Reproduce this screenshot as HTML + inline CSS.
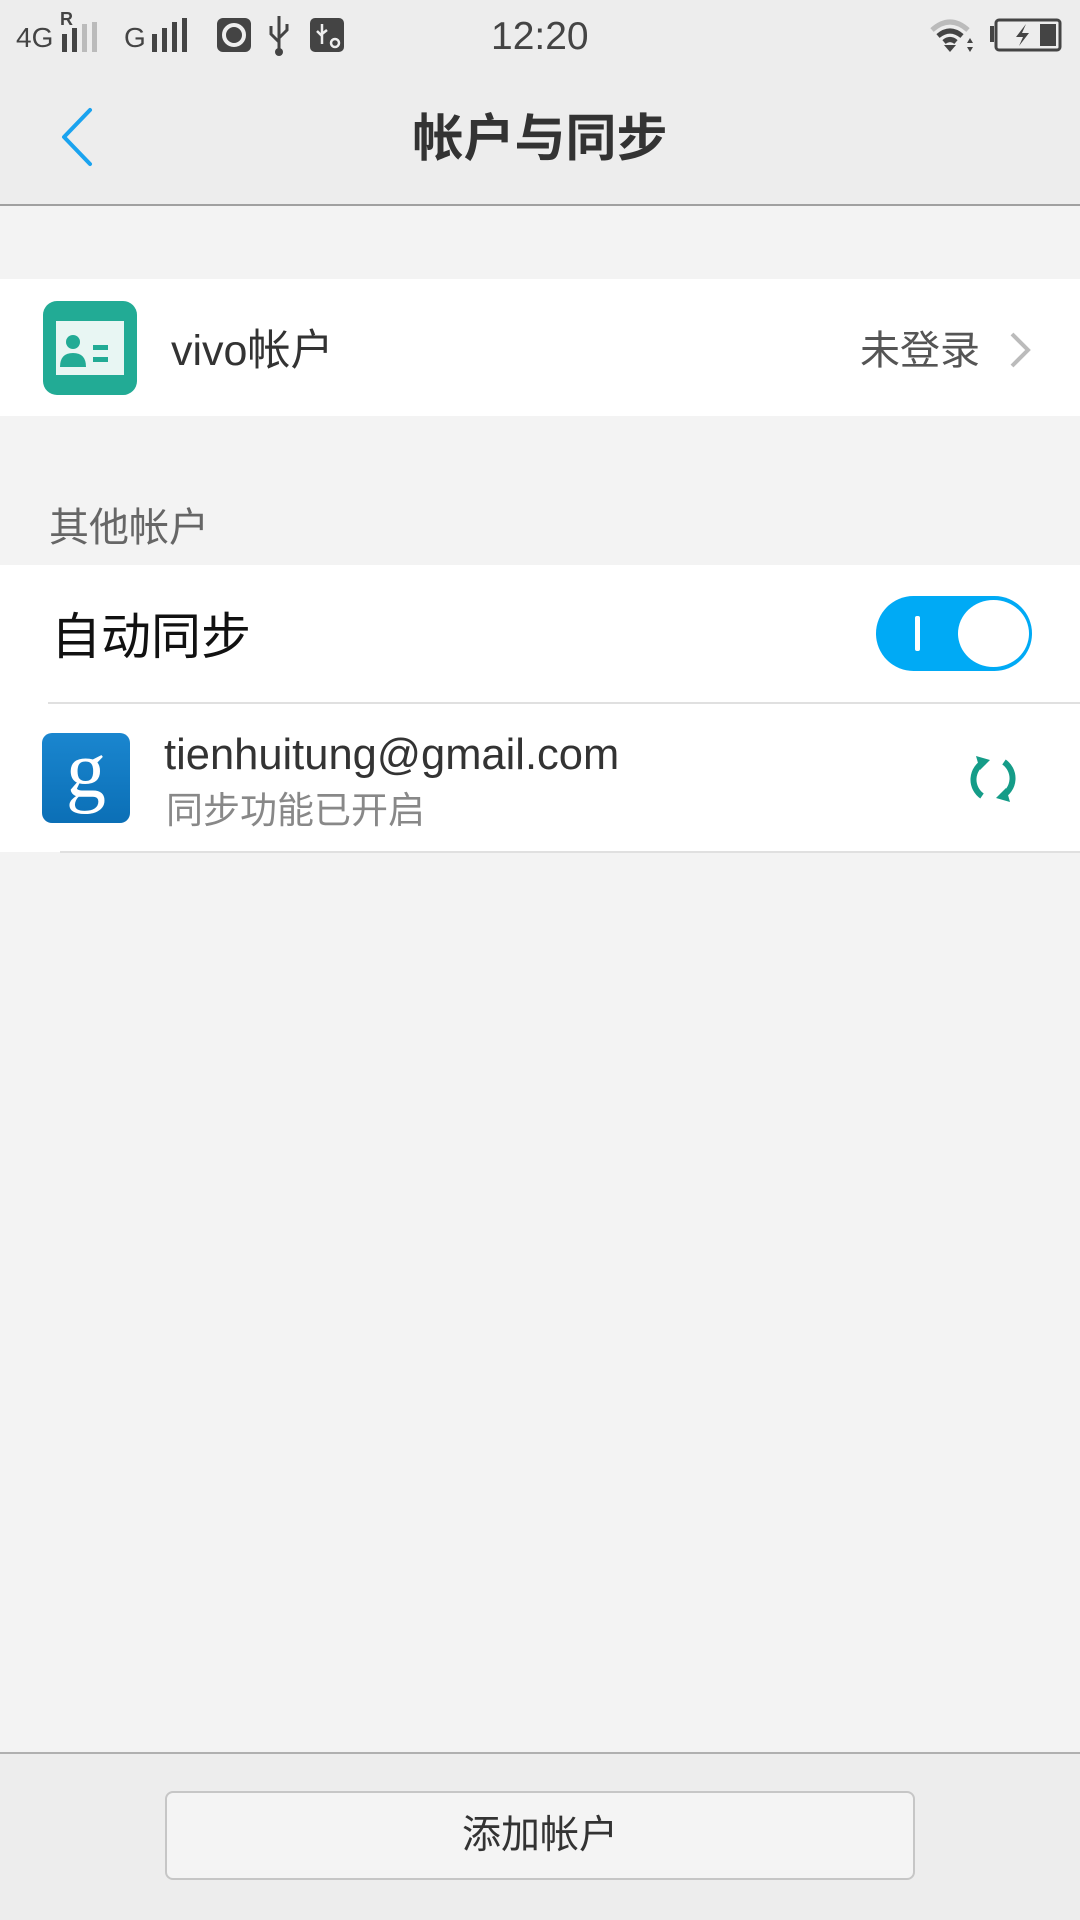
<!DOCTYPE html>
<html><head><meta charset="utf-8"><style>
*{margin:0;padding:0;box-sizing:border-box}
body{width:1080px;height:1920px;background:#f3f3f3;font-family:"Liberation Sans","Noto Sans CJK SC",sans-serif;position:relative;overflow:hidden}
.abs{position:absolute;line-height:1;white-space:nowrap}
</style></head><body>
<div class="abs" style="left:0;top:0;width:1080px;height:205px;background:#ededed"></div>
<div class="abs" style="left:0;top:204px;width:1080px;height:2px;background:#a0a0a0"></div>
<!-- status bar -->
<div class="abs" style="left:16px;top:24px;font-size:28px;color:#444">4G</div>
<div class="abs" style="left:60px;top:10px;font-size:18px;color:#444;font-weight:bold">R</div>
<svg class="abs" style="left:62px;top:22px" width="46" height="30"><rect x="0" y="12" width="5" height="18" fill="#444"/><rect x="10" y="6" width="5" height="24" fill="#444"/><rect x="20" y="2" width="5" height="28" fill="#bbb"/><rect x="30" y="0" width="5" height="30" fill="#bbb"/></svg>
<div class="abs" style="left:124px;top:24px;font-size:28px;color:#444">G</div>
<svg class="abs" style="left:152px;top:18px" width="46" height="34"><rect x="0" y="16" width="5" height="18" fill="#444"/><rect x="10" y="10" width="5" height="24" fill="#444"/><rect x="20" y="4" width="5" height="30" fill="#444"/><rect x="30" y="0" width="5" height="34" fill="#444"/></svg>
<svg class="abs" style="left:217px;top:18px" width="34" height="34"><rect width="34" height="34" rx="6" fill="#444"/><circle cx="17" cy="17" r="10" fill="none" stroke="#eee" stroke-width="4"/></svg>
<svg class="abs" style="left:267px;top:14px" width="24" height="42"><path d="M12 2V40M12 28L4 20V12M12 24L20 16V10" stroke="#444" stroke-width="3" fill="none"/><circle cx="12" cy="38" r="4" fill="#444"/></svg>
<svg class="abs" style="left:310px;top:18px" width="34" height="34"><rect width="34" height="34" rx="5" fill="#444"/><path d="M12 6V26M12 18L7 13M12 16L17 12" stroke="#eee" stroke-width="2.5" fill="none"/><circle cx="25" cy="25" r="4" fill="none" stroke="#eee" stroke-width="2.5"/></svg>
<div class="abs" style="left:491px;top:17px;font-size:39px;color:#444">12:20</div>
<svg class="abs" style="left:928px;top:18px" width="48" height="36"><path d="M4 12Q22 -4 40 12" stroke="#bbb" stroke-width="5" fill="none"/><path d="M10 18Q22 8 34 18" stroke="#444" stroke-width="5" fill="none"/><path d="M16 24Q22 19 28 24" stroke="#444" stroke-width="5" fill="none"/><path d="M22 34L16 27H28Z" fill="#444"/><path d="M42 20l-3 5h6zM42 34l-3-5h6z" fill="#444"/></svg>
<svg class="abs" style="left:986px;top:18px" width="78" height="34"><rect x="4" y="8" width="4" height="16" fill="#444"/><rect x="10" y="2" width="64" height="30" rx="3" fill="none" stroke="#444" stroke-width="3"/><rect x="54" y="6" width="16" height="22" fill="#444"/><path d="M40 6L30 19h7l-4 9 10-13h-7z" fill="#444"/></svg>
<!-- nav -->
<svg class="abs" style="left:56px;top:106px" width="40" height="62"><path d="M34 4L8 31L34 58" stroke="#1aa3ef" stroke-width="4" fill="none" stroke-linecap="round" stroke-linejoin="round"/></svg>
<div class="abs" style="left:0;width:1080px;top:113px;text-align:center;font-size:51px;font-weight:bold;color:#333">帐户与同步</div>
<!-- vivo row -->
<div class="abs" style="left:0;top:279px;width:1080px;height:137px;background:#fff"></div>
<svg class="abs" style="left:43px;top:301px" width="94" height="94"><rect width="94" height="94" rx="14" fill="#22ab95"/><rect x="13" y="20" width="68" height="54" fill="#e8f6f3"/><circle cx="30" cy="41" r="7" fill="#22ab95"/><path d="M17 66Q17 52 30 52Q43 52 43 66Z" fill="#22ab95"/><rect x="50" y="44" width="15" height="5" fill="#22ab95"/><rect x="50" y="56" width="15" height="5" fill="#22ab95"/></svg>
<div class="abs" style="left:171px;top:330px;font-size:43px;color:#333">vivo帐户</div>
<div class="abs" style="right:100px;top:331px;font-size:40px;color:#555">未登录</div>
<svg class="abs" style="left:1006px;top:330px" width="28" height="40"><path d="M6 4L22 20L6 36" stroke="#bbb" stroke-width="4" fill="none"/></svg>
<!-- other accounts -->
<div class="abs" style="left:49px;top:508px;font-size:40px;color:#666">其他帐户</div>
<div class="abs" style="left:0;top:565px;width:1080px;height:287px;background:#fff"></div>
<div class="abs" style="left:51px;top:612px;font-size:50px;color:#111">自动同步</div>
<div class="abs" style="left:876px;top:596px;width:156px;height:75px;border-radius:38px;background:#00aaf5"></div>
<div class="abs" style="left:958px;top:600px;width:71px;height:67px;border-radius:50%;background:#fff"></div>
<div class="abs" style="left:915px;top:616px;width:5px;height:35px;background:#fff;border-radius:2px"></div>
<div class="abs" style="left:48px;top:702px;width:1032px;height:2px;background:#e0e0e0"></div>
<svg class="abs" style="left:42px;top:733px" width="88" height="90"><defs><linearGradient id="g" x1="0" y1="0" x2="0" y2="1"><stop offset="0" stop-color="#1a86cf"/><stop offset="1" stop-color="#0b6fb6"/></linearGradient></defs><rect width="88" height="90" rx="10" fill="url(#g)"/><text x="44" y="64" text-anchor="middle" font-family="Liberation Serif,serif" font-size="80" fill="#fff">g</text></svg>
<div class="abs" style="left:164px;top:734px;font-size:43.5px;color:#333">tienhuitung@gmail.com</div>
<div class="abs" style="left:166px;top:792px;font-size:37px;color:#888">同步功能已开启</div>
<svg class="abs" style="left:966px;top:752px" width="54" height="54"><path d="M16 44A20 20 0 0 1 18 10" stroke="#159c88" stroke-width="6" fill="none"/><path d="M10 4L24 8L14 18Z" fill="#159c88"/><path d="M38 10A20 20 0 0 1 36 44" stroke="#159c88" stroke-width="6" fill="none"/><path d="M44 50L30 46L40 36Z" fill="#159c88"/></svg>
<div class="abs" style="left:60px;top:851px;width:1020px;height:2px;background:#e0e0e0"></div>
<!-- bottom -->
<div class="abs" style="left:0;top:1752px;width:1080px;height:168px;background:#ededed"></div>
<div class="abs" style="left:0;top:1752px;width:1080px;height:2px;background:#b0b0b0"></div>
<div class="abs" style="left:165px;top:1791px;width:750px;height:89px;border:2px solid #c6c6c6;border-radius:8px;background:#f4f4f4;display:flex;align-items:center;justify-content:center;font-size:39px;color:#333">添加帐户</div>
</body></html>
